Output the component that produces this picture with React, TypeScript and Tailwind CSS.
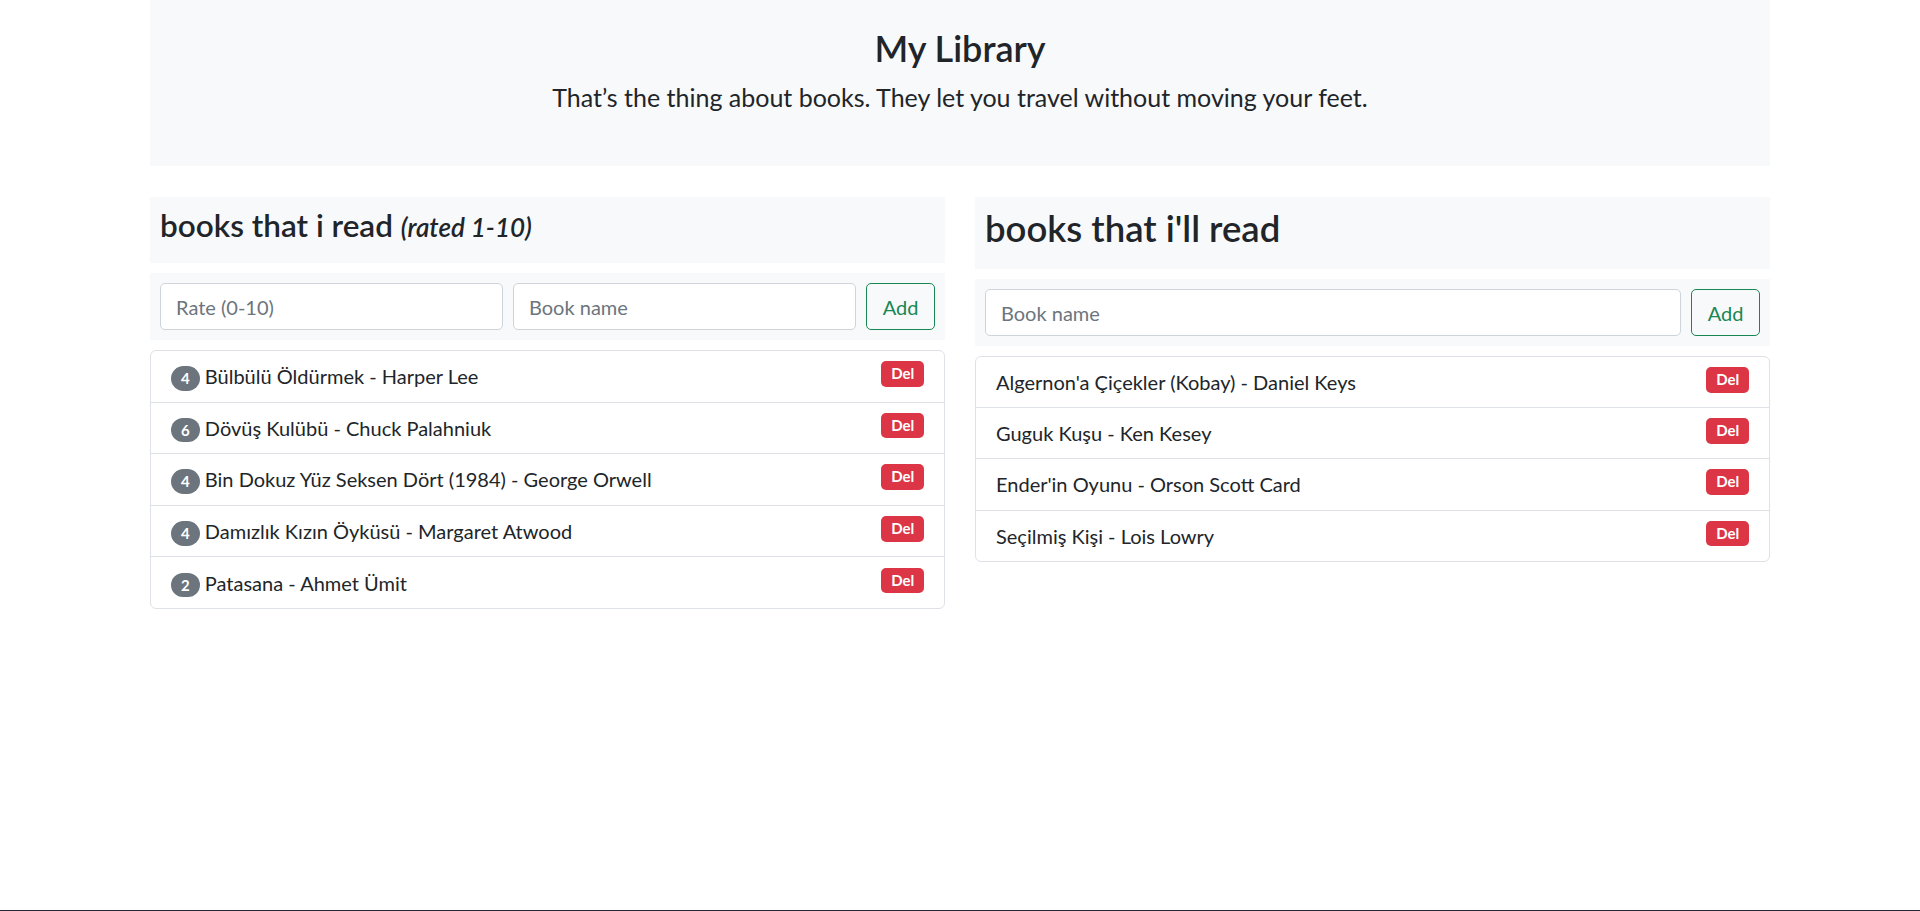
import React from "react";

const readBooks = [
  { rate: 4, name: "Bülbülü Öldürmek - Harper Lee" },
  { rate: 6, name: "Dövüş Kulübü - Chuck Palahniuk" },
  { rate: 4, name: "Bin Dokuz Yüz Seksen Dört (1984) - George Orwell" },
  { rate: 4, name: "Damızlık Kızın Öyküsü - Margaret Atwood" },
  { rate: 2, name: "Patasana - Ahmet Ümit" },
];

const toRead = [
  "Algernon'a Çiçekler (Kobay) - Daniel Keys",
  "Guguk Kuşu - Ken Kesey",
  "Ender'in Oyunu - Orson Scott Card",
  "Seçilmiş Kişi - Lois Lowry",
];

function DelBadge() {
  return (
    <span className="inline-block rounded-[5px] bg-[#dc3545] px-[9.75px] pt-[5px] pb-[5.5px] text-[15px] font-bold leading-[15px] text-white">
      Del
    </span>
  );
}

function Input({ placeholder }: { placeholder: string }) {
  return (
    <input
      placeholder={placeholder}
      className="h-[47px] min-w-0 flex-1 rounded-[5px] border border-[#ced4da] bg-white px-[15px] text-[20px] text-[#212529] placeholder:text-[#6c757d] outline-none"
    />
  );
}

function AddButton() {
  return (
    <button className="h-[47px] w-[69px] shrink-0 rounded-[5px] border border-[#198754] bg-transparent text-[20px] text-[#198754]">
      Add
    </button>
  );
}

export default function App() {
  return (
    <div
      className="flex min-h-[911px] flex-col bg-white text-[#212529]"
      style={{ fontFamily: "Lato, 'Noto Sans', sans-serif" }}
    >
      <div className="mx-auto w-[1620px] flex-1">
        <div className="h-[166px] bg-[#f8f9fa] pt-[27px] text-center">
          <h1 className="text-[36px] font-semibold leading-[42px]">My Library</h1>
          <p className="mt-[10px] text-[25px] leading-[37.5px]">
            That’s the thing about books. They let you travel without moving your feet.
          </p>
        </div>

        <div className="mt-[31px] grid grid-cols-2 items-start gap-x-[30px]">
          <div>
            <div className="h-[66px] bg-[#f8f9fa] px-[10px] pt-[10px]">
              <h4 className="text-[31.5px] font-semibold leading-[36px]">
                books that i read{" "}
                <small className="text-[26px] italic leading-[0]">(rated 1-10)</small>
              </h4>
            </div>
            <div className="mt-[10px] flex gap-[10.5px] bg-[#f8f9fa] p-[10px]">
              <Input placeholder="Rate (0-10)" />
              <Input placeholder="Book name" />
              <AddButton />
            </div>
            <ul className="mt-[10px] rounded-[6px] border border-[#dee2e6]">
              {readBooks.map((b, i) => (
                <li
                  key={i}
                  className={
                    "flex items-start justify-between px-[20px] py-[10.3px] text-[20px] leading-[30px] " +
                    (i < readBooks.length - 1 ? "border-b border-[#dee2e6]" : "")
                  }
                >
                  <span>
                    <span className="inline-block rounded-full bg-[#6c757d] px-[10px] pt-[5px] pb-[4.5px] text-[15px] font-bold leading-[15px] text-white">
                      {b.rate}
                    </span>{" "}
                    {b.name}
                  </span>
                  <DelBadge />
                </li>
              ))}
            </ul>
          </div>

          <div>
            <div className="h-[72px] bg-[#f8f9fa] px-[10px] pt-[10px]">
              <h3 className="text-[36.5px] font-semibold leading-[42px]">books that i'll read</h3>
            </div>
            <div className="mt-[10px] flex gap-[10.5px] bg-[#f8f9fa] p-[10px]">
              <Input placeholder="Book name" />
              <AddButton />
            </div>
            <ul className="mt-[10px] rounded-[6px] border border-[#dee2e6]">
              {toRead.map((b, i) => (
                <li
                  key={i}
                  className={
                    "flex items-start justify-between px-[20px] py-[10.1px] text-[20px] leading-[30px] " +
                    (i < toRead.length - 1 ? "border-b border-[#dee2e6]" : "")
                  }
                >
                  <span>{b}</span>
                  <DelBadge />
                </li>
              ))}
            </ul>
          </div>
        </div>
      </div>
      <div className="h-px w-full bg-[#26263a]" />
    </div>
  );
}
